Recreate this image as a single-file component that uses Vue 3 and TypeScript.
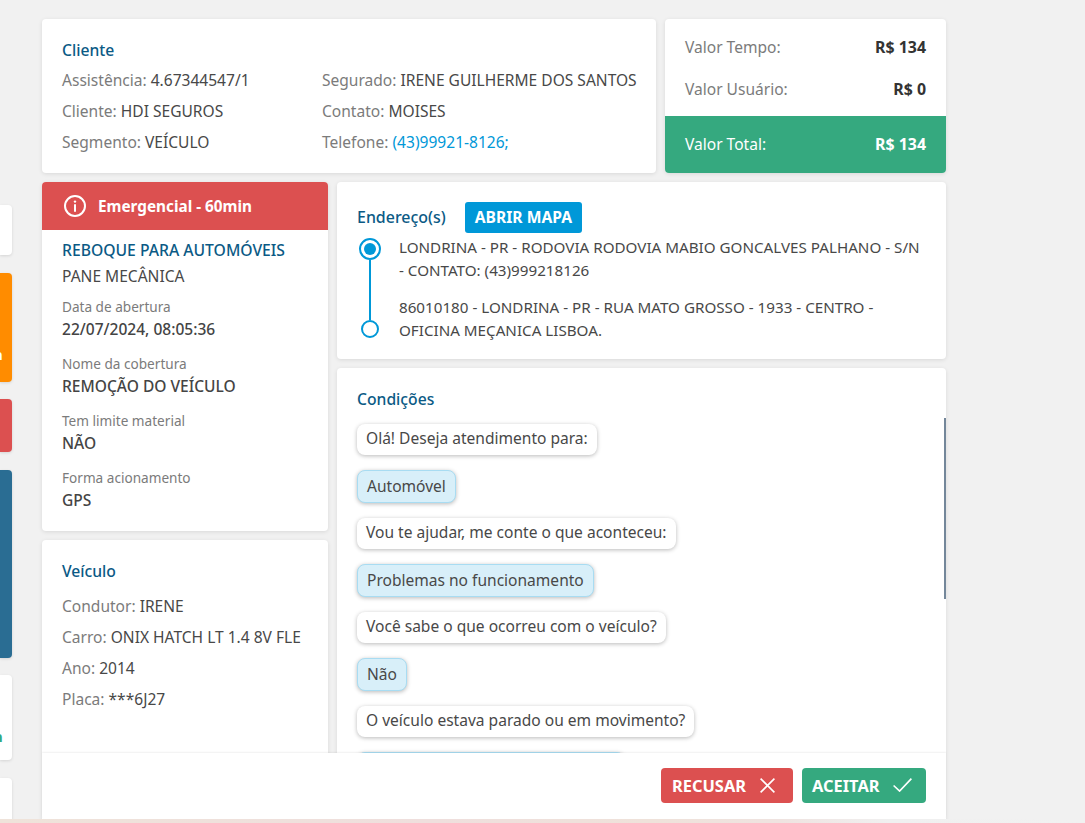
<script setup lang="ts">
interface Field { label: string; value: string; link?: boolean }
const clientLeft: Field[] = [
  { label: 'Assistência:', value: '4.67344547/1' },
  { label: 'Cliente:', value: 'HDI SEGUROS' },
  { label: 'Segmento:', value: 'VEÍCULO' },
]
const clientRight: Field[] = [
  { label: 'Segurado:', value: 'IRENE GUILHERME DOS SANTOS' },
  { label: 'Contato:', value: 'MOISES' },
  { label: 'Telefone:', value: '(43)99921-8126;', link: true },
]
const details = [
  { label: 'Data de abertura', value: '22/07/2024, 08:05:36' },
  { label: 'Nome da cobertura', value: 'REMOÇÃO DO VEÍCULO' },
  { label: 'Tem limite material', value: 'NÃO' },
  { label: 'Forma acionamento', value: 'GPS' },
]
const vehicle: Field[] = [
  { label: 'Condutor:', value: 'IRENE' },
  { label: 'Carro:', value: 'ONIX HATCH LT 1.4 8V FLE' },
  { label: 'Ano:', value: '2014' },
  { label: 'Placa:', value: '***6J27' },
]
const chat = [
  { text: 'Olá! Deseja atendimento para:', user: false },
  { text: 'Automóvel', user: true },
  { text: 'Vou te ajudar, me conte o que aconteceu:', user: false },
  { text: 'Problemas no funcionamento', user: true },
  { text: 'Você sabe o que ocorreu com o veículo?', user: false },
  { text: 'Não', user: true },
  { text: 'O veículo estava parado ou em movimento?', user: false },
  { text: 'Em movimento, quando ele parou', user: true },
]
</script>

<template>
  <div class="page">
    <div class="stage">
      <aside class="rail">
        <div class="stub s1"></div>
        <div class="stub s2"><span>n</span></div>
        <div class="stub s3"></div>
        <div class="stub s4"></div>
        <div class="stub s5"><span>n</span></div>
        <div class="stub s6"></div>
      </aside>

      <main class="main">
        <div class="row top">
          <section class="card client">
            <h3 class="title">Cliente</h3>
            <div class="client-grid">
              <div class="col">
                <p v-for="f in clientLeft" :key="f.label" class="field">
                  <span class="lab">{{ f.label }}&nbsp;</span><span>{{ f.value }}</span>
                </p>
              </div>
              <div class="col">
                <p v-for="f in clientRight" :key="f.label" class="field">
                  <span class="lab">{{ f.label }}&nbsp;</span><span :class="{ link: f.link }">{{ f.value }}</span>
                </p>
              </div>
            </div>
          </section>
          <section class="card values">
            <div class="vrow"><span class="lab">Valor Tempo:</span><b>R$ 134</b></div>
            <div class="vrow"><span class="lab">Valor Usuário:</span><b>R$ 0</b></div>
            <div class="vtotal"><span>Valor Total:</span><b>R$ 134</b></div>
          </section>
        </div>

        <div class="row bottom">
          <div class="left">
            <section class="card service">
              <div class="alert">
                <svg width="24" height="24" viewBox="0 0 24 24" fill="none" stroke="#fff" stroke-width="2">
                  <circle cx="12" cy="12" r="10" />
                  <path d="M12 11v6" stroke-linecap="round" />
                  <circle cx="12" cy="7.6" r="1.2" fill="#fff" stroke="none" />
                </svg>
                <span>Emergencial - 60min</span>
              </div>
              <div class="service-body">
                <h3 class="title caps">REBOQUE PARA AUTOMÓVEIS</h3>
                <p class="sub">PANE MECÂNICA</p>
                <div v-for="d in details" :key="d.label" class="detail">
                  <span class="dlabel">{{ d.label }}</span>
                  <strong>{{ d.value }}</strong>
                </div>
              </div>
            </section>
            <section class="card vehicle">
              <h3 class="title">Veículo</h3>
              <p v-for="f in vehicle" :key="f.label" class="field">
                <span class="lab">{{ f.label }}&nbsp;</span><span>{{ f.value }}</span>
              </p>
            </section>
          </div>

          <div class="right">
            <section class="card address">
              <div class="addr-head">
                <h3 class="title wide">Endereço(s)</h3>
                <span class="map-btn">ABRIR MAPA</span>
              </div>
              <div class="route">
                <div class="track">
                  <span class="dot first"></span>
                  <span class="line"></span>
                  <span class="dot last"></span>
                </div>
                <div class="stops">
                  <p>LONDRINA - PR - RODOVIA RODOVIA MABIO GONCALVES PALHANO - S/N<br />- CONTATO: (43)999218126</p>
                  <p>86010180 - LONDRINA - PR - RUA MATO GROSSO - 1933 - CENTRO -<br />OFICINA MEÇANICA LISBOA.</p>
                </div>
              </div>
            </section>
            <section class="card conditions">
              <h3 class="title">Condições</h3>
              <div class="chat">
                <div v-for="m in chat" :key="m.text" class="bubble" :class="{ user: m.user }">{{ m.text }}</div>
              </div>
              <span class="scroll"></span>
            </section>
          </div>
        </div>

        <footer class="actions">
          <span class="btn refuse">RECUSAR
            <svg width="15" height="15" viewBox="0 0 15 15" fill="none" stroke="#fff" stroke-width="1.6"><path d="M.6.6l13.8 13.8M14.4.6L.6 14.4" /></svg>
          </span>
          <span class="btn accept">ACEITAR
            <svg width="19" height="14" viewBox="0 0 19 14" fill="none" stroke="#fff" stroke-width="1.6"><path d="M.6 7.5l6 5.6L18.4.6" /></svg>
          </span>
        </footer>
      </main>
    </div>
    <div class="strip"></div>
  </div>
</template>

<style scoped>
.page {
  height: 823px;
  overflow: hidden;
  background: #f1f1f1;
  font-family: "Noto Sans", sans-serif;
  font-size: 15.55px;
  color: #484848;
}
.stage { position: relative; display: flex; gap: 30px; height: 819px; overflow: hidden; }
.strip { height: 4px; background: linear-gradient(90deg, #efe3da 0%, #efdfdd 40%, #efe2da 60%, #efe3e0 72%, #f0f0f0 82%, #f1f1f1 100%); }
.rail { width: 12px; flex: none; padding-top: 205px; display: flex; flex-direction: column; }
.stub { border-radius: 0 4px 4px 0; background: #fff; box-shadow: 0 1px 3px rgba(0,0,0,.12); position: relative; flex: none; overflow: hidden; }
.stub span { position: absolute; left: -7px; font-weight: 700; font-size: 15px; line-height: 18px; }
.s1 { height: 50px; margin-bottom: 18px; }
.s2 { height: 109px; margin-bottom: 17px; background: #ff8c00; }
.s2 span { color: #fff; top: 72px; }
.s3 { height: 53px; margin-bottom: 18px; background: #dc5050; }
.s4 { height: 188px; margin-bottom: 17px; background: #2a6d93; }
.s5 { height: 85px; margin-bottom: 18px; }
.s5 span { color: #35a97f; top: 52px; }
.s6 { height: 60px; }

.main { position: relative; width: 904px; flex: none; padding-top: 19px; }
.row { display: flex; gap: 9px; }
.top { height: 154px; margin-bottom: 9px; }
.card { background: #fff; border-radius: 4px; box-shadow: 0 1px 4px rgba(0,0,0,.1); overflow: hidden; }
.title { margin: 0; font-size: 15.7px; font-weight: 500; line-height: 22px; color: #0b5a85; white-space: nowrap; }
.wide { font-size: 15.95px; }
.lab { color: #7b7b7b; }
p { margin: 0; }
.field { line-height: 31px; white-space: nowrap; }
.link { color: #0098d8; }

.client { width: 614px; padding: 20px 20px 0; box-sizing: border-box; }
.client-grid { display: grid; grid-template-columns: 260px 1fr; margin-top: 4px; }
.values { flex: 1; display: flex; flex-direction: column; }
.vrow { height: 42px; display: flex; justify-content: space-between; align-items: center; padding: 0 20px; flex: none; }
.vrow:first-child { margin-top: 7px; }
.vrow b, .vtotal b { font-size: 15.9px; font-weight: 700; color: #333; }
.vtotal { margin-top: auto; height: 57px; background: #35a97f; color: #fff; display: flex; justify-content: space-between; align-items: center; padding: 0 20px 1px; box-sizing: border-box; }
.vtotal b { color: #fff; }

.left { width: 286px; flex: none; display: flex; flex-direction: column; gap: 9px; }
.right { width: 609px; flex: none; min-width: 0; display: flex; flex-direction: column; gap: 9px; }
.service { height: 349px; flex: none; }
.alert { height: 48px; background: #dc5050; color: #fff; display: flex; align-items: center; gap: 11px; padding: 0 21px; font-weight: 700; font-size: 15.3px; }
.service-body { padding: 9px 20px; }
.sub { line-height: 24px; margin-top: 3px; margin-bottom: 8px; }
.detail { display: flex; flex-direction: column; height: 57px; }
.dlabel { font-size: 13.6px; line-height: 22px; color: #7b7b7b; }
.detail strong { font-weight: 500; line-height: 22px; color: #444; }
.vehicle { height: 300px; padding: 20px; box-sizing: border-box; flex: none; }
.vehicle .title { margin-bottom: 9px; }

.address { height: 177px; padding: 20px; box-sizing: border-box; flex: none; }
.addr-head { display: flex; align-items: center; gap: 19px; height: 30px; }
.map-btn { background: #0098d8; color: #fff; font-weight: 700; font-size: 15.65px; line-height: 31px; height: 31px; padding: 0 10px; border-radius: 3px; }
.route { display: flex; gap: 16px; margin-top: 3px; }
.track { width: 26px; flex: none; display: flex; flex-direction: column; align-items: center; padding-top: 3px; box-sizing: border-box; height: 103px; }
.dot { flex: none; border-radius: 50%; border: 2px solid #0098d8; box-sizing: border-box; background: #fff; }
.first { width: 22px; height: 22px; position: relative; }
.first::after { content: ""; position: absolute; inset: 3px; border-radius: 50%; background: #0098d8; }
.last { width: 18px; height: 18px; }
.line { flex: 1; width: 2px; background: #0098d8; }
.stops { flex: 1; min-width: 0; padding-top: 1px; font-size: 15.2px; }
.stops p { line-height: 23px; margin-bottom: 14px; white-space: nowrap; }

.conditions { position: relative; height: 520px; padding: 20px; box-sizing: border-box; flex: none; }
.chat { display: flex; flex-direction: column; align-items: flex-start; gap: 15px; margin-top: 14px; }
.bubble { height: 31px; line-height: 29px; box-sizing: border-box; padding: 0 9px; background: #fff; border-radius: 8px; box-shadow: 0 1px 4px rgba(0,0,0,.28); white-space: nowrap; }
.user { background: #d8eff9; border: 1px solid #a8dcf2; padding: 0 9px; height: 33px; line-height: 30px; }
.scroll { position: absolute; right: 0; top: 50px; width: 2px; height: 181px; background: #74879a; }

.actions { position: absolute; left: 0; right: 0; top: 753px; height: 66px; background: #fff; border-radius: 0 0 4px 4px; box-shadow: 0 -1px 2px rgba(0,0,0,.06); box-sizing: border-box; display: flex; justify-content: flex-end; align-items: center; gap: 9px; padding: 0 20px 2px; }
.btn { height: 35px; border-radius: 4px; color: #fff; font-weight: 700; font-size: 16.4px; display: flex; align-items: center; box-sizing: border-box; }
.refuse { background: #dc5050; width: 132px; padding-left: 11px; gap: 14px; }
.accept { background: #35a97f; width: 124px; padding-left: 10px; gap: 13px; }
</style>
